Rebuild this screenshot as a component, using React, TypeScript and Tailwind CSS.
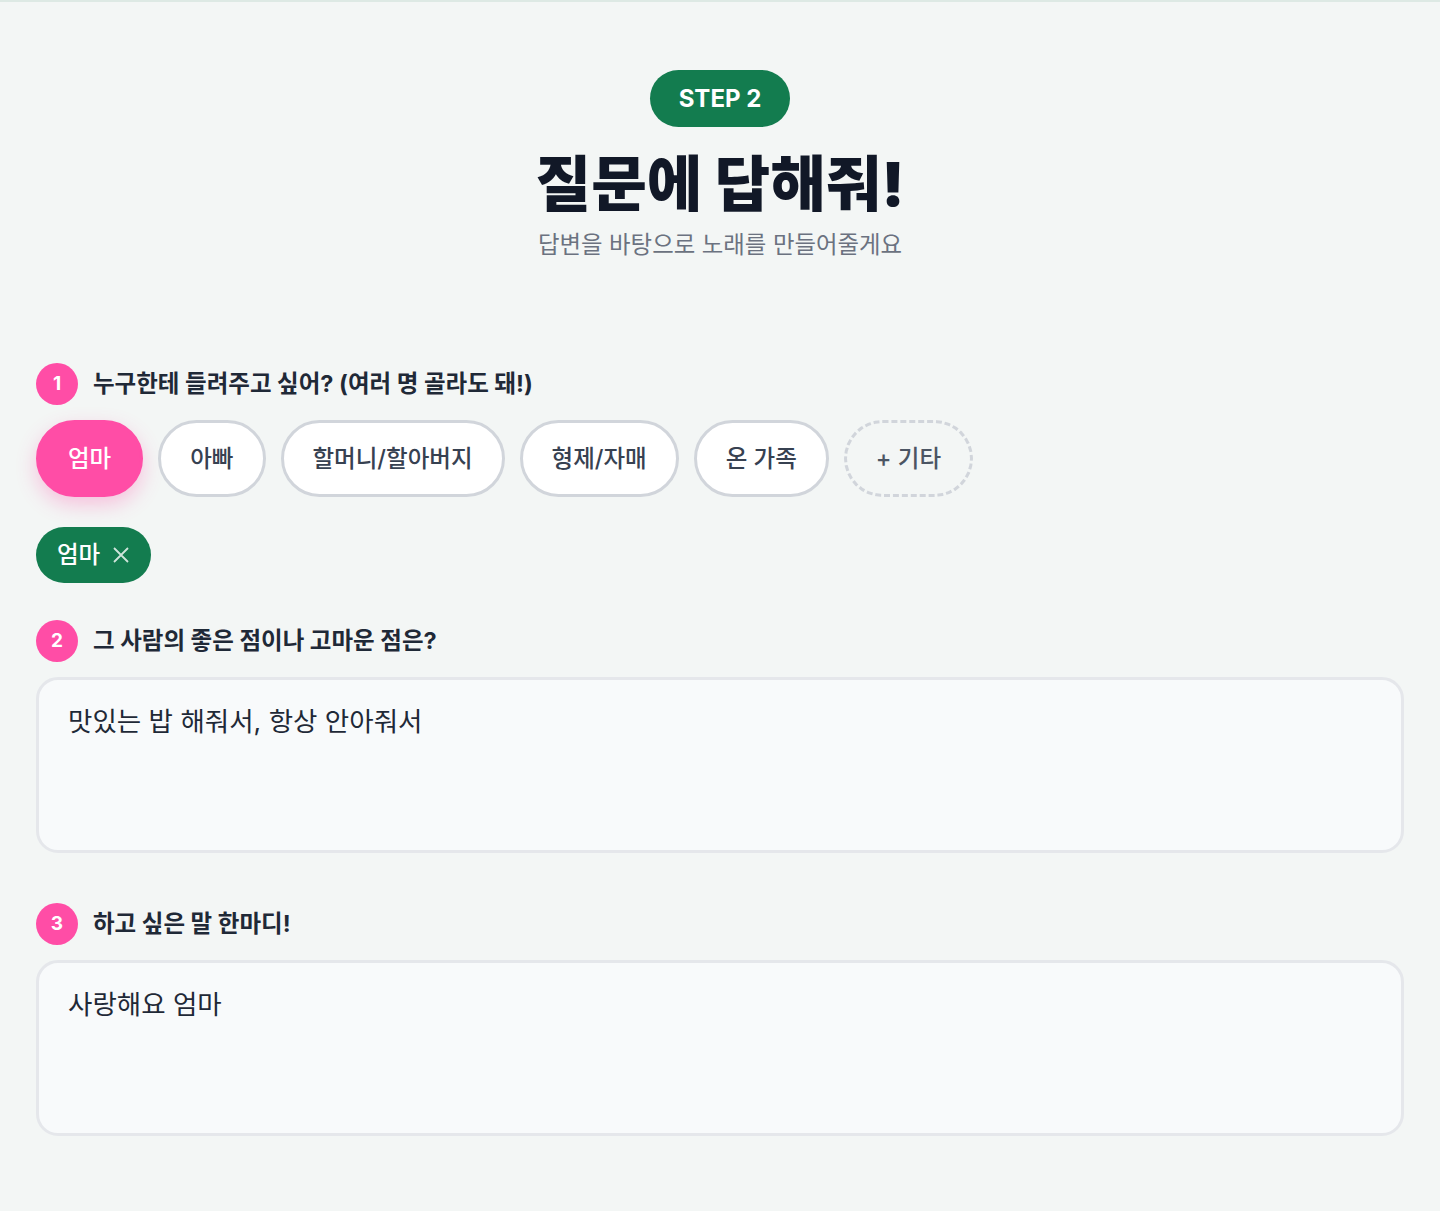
import React from "react";

const font = { fontFamily: "Inter, 'Noto Sans CJK KR', sans-serif" };

const options = ["엄마", "아빠", "할머니/할아버지", "형제/자매", "온 가족"];

function QuestionLabel({ num, children }: { num: number; children: React.ReactNode }) {
  return (
    <div className="flex items-center gap-[15px]">
      <span className="flex h-[42px] w-[42px] items-center justify-center rounded-full bg-[#ff4da6] text-[19px] font-bold text-white">
        {num}
      </span>
      <span className="text-[23.5px] font-bold text-[#1f2937]">{children}</span>
    </div>
  );
}

function Answer({ value }: { value: string }) {
  return (
    <textarea
      readOnly
      defaultValue={value}
      className="mt-[15px] block h-[176px] w-full resize-none rounded-[22px] border-[3px] border-[#e5e7eb] bg-[#f8fafb] px-[29px] pt-[22px] text-[26.5px] leading-[1.5] text-[#1f2937] outline-none"
    />
  );
}

export default function App() {
  const selected = "엄마";

  return (
    <div className="min-h-[1211px] bg-[#f3f6f5]" style={font}>
      <div className="h-[2px] bg-[#dde9e4]" />
      <div className="px-9 pt-[68px] pb-16">
        <div className="flex flex-col items-center">
          <div className="flex h-[57px] w-[140px] items-center justify-center rounded-full bg-[#137c4f] text-[24px] font-bold text-white">
            STEP 2
          </div>
          <h1 className="mt-[21px] text-[60.5px] leading-[72px] font-black text-[#111827]">
            질문에 답해줘!
          </h1>
          <p className="mt-[10px] text-[23.4px] leading-[30px] text-[#6b7280]">
            답변을 바탕으로 노래를 만들어줄게요
          </p>
        </div>

        <div className="mt-[103px]">
          <QuestionLabel num={1}>누구한테 들려주고 싶어? (여러 명 골라도 돼!)</QuestionLabel>
          <div className="mt-[15px] flex flex-wrap gap-[15px]">
            {options.map((o) =>
              o === selected ? (
                <button
                  key={o}
                  className="h-[77px] rounded-full border-[3px] border-[#ff4da6] bg-[#ff4da6] px-[29px] text-[23.5px] font-medium text-white shadow-[0_8px_20px_rgba(255,77,166,0.3)]"
                >
                  {o}
                </button>
              ) : (
                <button
                  key={o}
                  className="h-[77px] rounded-full border-[3px] border-[#d1d5db] bg-white px-[29px] text-[23.5px] font-medium text-[#374151]"
                >
                  {o}
                </button>
              )
            )}
            <button className="h-[77px] rounded-full border-[3px] border-dashed border-[#d1d5db] px-[29px] text-[23.5px] font-medium text-[#4b5563]">
              + 기타
            </button>
          </div>

          <div className="mt-[30px] flex">
            <span className="flex h-[56px] items-center gap-3 rounded-full bg-[#137c4f] px-[21px] text-[23.5px] font-medium text-white">
              엄마
              <svg width="18" height="18" viewBox="0 0 18 18" fill="none" stroke="currentColor" strokeWidth="1.8" className="opacity-80">
                <path d="M2 2l14 14M16 2L2 16" />
              </svg>
            </span>
          </div>
        </div>

        <div className="mt-[37px]">
          <QuestionLabel num={2}>그 사람의 좋은 점이나 고마운 점은?</QuestionLabel>
          <Answer value="맛있는 밥 해줘서, 항상 안아줘서" />
        </div>

        <div className="mt-[50px]">
          <QuestionLabel num={3}>하고 싶은 말 한마디!</QuestionLabel>
          <Answer value="사랑해요 엄마" />
        </div>
      </div>
    </div>
  );
}
